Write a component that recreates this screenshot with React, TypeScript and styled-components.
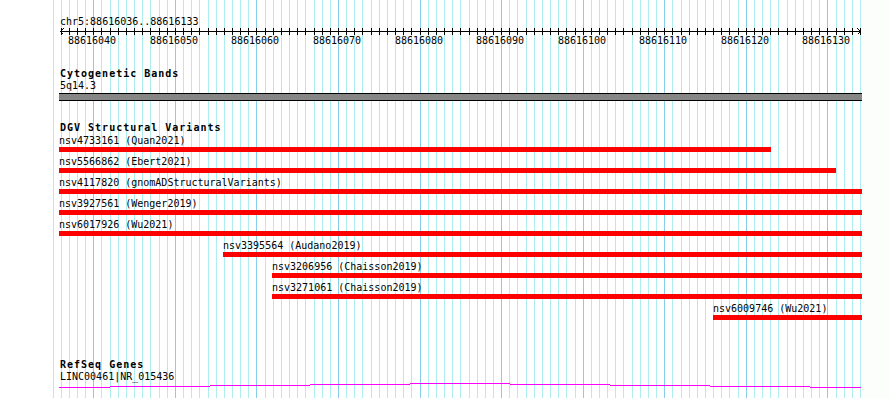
import React from "react";
import styled, { createGlobalStyle } from "styled-components";

// view: chr5:88616036..88616133, drawn from x=59 to x=862
const VIEW_START = 88616036;
const VIEW_LEFT = 59;
const VIEW_WIDTH = 803;
const ORIGIN = 60.7;
const BP_PX = 8.156;

const lineX = (k: number) => Math.round(ORIGIN + BP_PX * k);
const posX = (pos: number) => ORIGIN + BP_PX * (pos - VIEW_START) - 0.5;

interface Variant {
  name: string;
  source: string;
  start: number;
  end: number;
}

const variants: Variant[] = [
  { name: "nsv4733161", source: "Quan2021", start: 88615210, end: 88616123 },
  { name: "nsv5566862", source: "Ebert2021", start: 88615402, end: 88616131 },
  { name: "nsv4117820", source: "gnomADStructuralVariants", start: 88615880, end: 88616512 },
  { name: "nsv3927561", source: "Wenger2019", start: 88615731, end: 88616290 },
  { name: "nsv6017926", source: "Wu2021", start: 88615990, end: 88616402 },
  { name: "nsv3395564", source: "Audano2019", start: 88616056, end: 88616380 },
  { name: "nsv3206956", source: "Chaisson2019", start: 88616062, end: 88616301 },
  { name: "nsv3271061", source: "Chaisson2019", start: 88616062, end: 88616301 },
  { name: "nsv6009746", source: "Wu2021", start: 88616116, end: 88616644 },
];

const geneSegments: [number, number, number][] = [
  [59, 110, 387],
  [110, 210, 386],
  [210, 310, 385],
  [310, 410, 384],
  [410, 510, 383],
  [510, 610, 384],
  [610, 710, 385],
  [710, 810, 386],
  [810, 861, 387],
];

const GlobalStyle = createGlobalStyle`
  html, body {
    margin: 0;
    padding: 0;
    background: #ffffff;
  }
  body {
    font-family: "DejaVu Sans Mono", "Liberation Mono", monospace;
    color: #000;
  }
`;

const Page = styled.div`
  position: relative;
  display: flex;
  width: 890px;
  height: 398px;
  overflow: hidden;
  background: #ffffff;
`;

const Gutter = styled.div`
  flex: none;
  width: ${VIEW_LEFT}px;
`;

const OffView = styled.div`
  flex: 1;
  background: #fbfefb;
`;

const GridLayer = styled.svg`
  position: absolute;
  top: 0;
  left: 0;
  pointer-events: none;
`;

const Tracks = styled.div`
  position: relative;
  z-index: 1;
  flex: none;
  width: ${VIEW_WIDTH}px;
  display: flex;
  flex-direction: column;
  padding-top: 16px;
`;

const Text = styled.div`
  font-size: 10px;
  line-height: 11px;
  height: 11px;
  white-space: nowrap;
  padding-left: 1px;
`;

const TrackTitle = styled(Text)<{ $gap: number }>`
  margin-top: ${(p) => p.$gap}px;
  font-weight: bold;
  letter-spacing: 1px;
`;

const SubLabel = styled(Text)<{ $gap?: number }>`
  margin-top: ${(p) => p.$gap || 0}px;
`;

const TickLabels = styled.div`
  position: relative;
  height: 11px;
`;

const TickLabel = styled.span`
  position: absolute;
  top: 0;
  font-size: 10px;
  line-height: 11px;
  transform: translateX(-50%);
  white-space: nowrap;
`;

const Band = styled.div`
  margin-top: 2px;
  height: 6px;
  border-top: 1px solid #000;
  border-bottom: 1px solid #000;
  background: #868686;
`;

const VariantList = styled.div`
  margin-top: 2px;
  display: flex;
  flex-direction: column;
  gap: 4px;
`;

const FeatureRow = styled.div`
  display: flex;
  flex-direction: column;
  align-items: flex-start;
`;

const FeatureLabel = styled.div`
  font-size: 10px;
  line-height: 11px;
  height: 11px;
  white-space: nowrap;
  margin-bottom: 1px;
`;

const FeatureBar = styled.div`
  height: 5px;
  background: #ff0000;
`;

const Ruler = () => {
  const ticks = [];
  for (let k = 0; k <= 98; k++) {
    ticks.push(<rect key={k} x={lineX(k) - VIEW_LEFT} y={1} width={1} height={7} fill="#000" />);
  }
  return (
    <svg width={VIEW_WIDTH} height={8} style={{ display: "block" }} shapeRendering="crispEdges">
      <rect x={1} y={4} width={801} height={1} fill="#000" />
      {ticks}
      <path d="M4.5 1.5 L1.5 4.5 L4.5 7.5" stroke="#000" fill="none" />
      <path d="M798.5 1.5 L801.5 4.5 L798.5 7.5" stroke="#000" fill="none" />
    </svg>
  );
};

const Grid = () => {
  const lines = [];
  for (let k = -1; k <= 98; k++) {
    const major = (k - 4) % 10 === 0;
    lines.push(
      <rect key={k} x={lineX(k)} y={0} width={1} height={398} fill={major ? "#87ceeb" : "#afeeee"} />
    );
  }
  return (
    <GridLayer width={890} height={398} shapeRendering="crispEdges">
      {lines}
    </GridLayer>
  );
};

const VariantFeature = ({ v }: { v: Variant }) => {
  const left = Math.max(VIEW_LEFT, Math.round(posX(v.start)));
  const right = Math.min(VIEW_LEFT + VIEW_WIDTH, Math.round(posX(v.end)) + 1);
  return (
    <FeatureRow>
      <FeatureLabel style={{ marginLeft: left - VIEW_LEFT }}>
        {v.name} ({v.source})
      </FeatureLabel>
      <FeatureBar style={{ marginLeft: left - VIEW_LEFT, width: right - left }} />
    </FeatureRow>
  );
};

export default function App() {
  const labels = [];
  for (let k = 4; k <= 94; k += 10) {
    labels.push(
      <TickLabel key={k} style={{ left: lineX(k) - 1 - VIEW_LEFT }}>
        {VIEW_START + k}
      </TickLabel>
    );
  }

  return (
    <>
      <GlobalStyle />
      <Page>
        <Grid />
        <Gutter />
        <Tracks>
          <Text>chr5:88616036..88616133</Text>
          <Ruler />
          <TickLabels>{labels}</TickLabels>

          <TrackTitle $gap={22}>Cytogenetic Bands</TrackTitle>
          <SubLabel $gap={1}>5q14.3</SubLabel>
          <Band />

          <TrackTitle $gap={21}>DGV Structural Variants</TrackTitle>
          <VariantList>
            {variants.map((v) => (
              <VariantFeature key={v.name} v={v} />
            ))}
          </VariantList>

          <TrackTitle $gap={39}>RefSeq Genes</TrackTitle>
          <SubLabel $gap={1}>LINC00461|NR_015436</SubLabel>
          <svg width={VIEW_WIDTH} height={6} style={{ display: "block" }} shapeRendering="crispEdges">
            {geneSegments.map(([x1, x2, y]) => (
              <rect key={x1} x={x1 - VIEW_LEFT} y={y - 382} width={x2 - x1} height={1} fill="#ff00ff" />
            ))}
          </svg>
        </Tracks>
        <OffView />
      </Page>
    </>
  );
}
